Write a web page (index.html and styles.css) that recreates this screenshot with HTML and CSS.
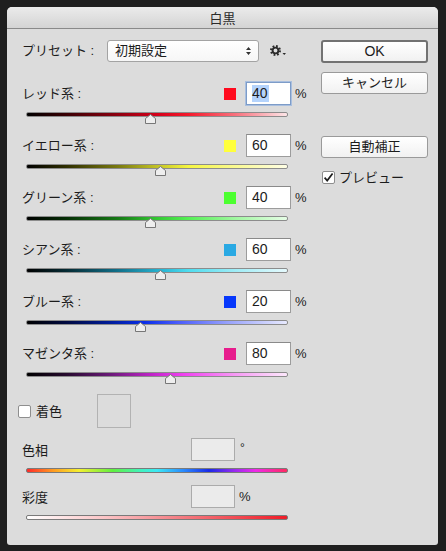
FILE: index.html
```html
<!DOCTYPE html>
<html lang="ja">
<head>
<meta charset="utf-8">
<title>白黒</title>
<link rel="stylesheet" href="styles.css">
</head>
<body>
<div class="dialog">
  <div class="titlebar">白黒</div>
  <div class="content">
    <div class="left">
      <div class="preset-row">
        <span class="preset-label">プリセット :</span>
        <div class="select">
          <span class="select-text">初期設定</span>
          <svg class="select-arrows" width="7" height="10" viewBox="0 0 7 10"><path d="M3.5 1 L6 4 H1 Z M3.5 9 L6 6 H1 Z" fill="#333"/></svg>
        </div>
        <svg class="gear" width="18" height="12" viewBox="0 0 18 12">
          <circle cx="5.5" cy="5.5" r="4.3" fill="none" stroke="#2b2b2b" stroke-width="2.4" stroke-dasharray="1.69 1.69"/>
          <circle cx="5.5" cy="5.5" r="2.9" fill="none" stroke="#2b2b2b" stroke-width="1.9"/>
          <path d="M12.5 8 H16 L14.25 10 Z" fill="#2b2b2b"/>
        </svg>
      </div>

      <div class="channel red">
        <div class="head">
          <span class="label">レッド系 :</span>
          <span class="swatch"></span>
          <div class="field focus"><span class="sel">40</span></div>
          <span class="unit">%</span>
        </div>
        <div class="slider">
          <div class="track"></div>
          <svg class="thumb" style="left:119px" width="11" height="10" viewBox="0 0 11 10"><path d="M0.5 9.5 V4.5 L5.5 0.5 L10.5 4.5 V9.5 Z" fill="#eeeeee" stroke="#777" stroke-width="1"/></svg>
        </div>
      </div>

      <div class="channel yellow">
        <div class="head">
          <span class="label">イエロー系 :</span>
          <span class="swatch"></span>
          <div class="field">60</div>
          <span class="unit">%</span>
        </div>
        <div class="slider">
          <div class="track"></div>
          <svg class="thumb" style="left:129px" width="11" height="10" viewBox="0 0 11 10"><path d="M0.5 9.5 V4.5 L5.5 0.5 L10.5 4.5 V9.5 Z" fill="#eeeeee" stroke="#777" stroke-width="1"/></svg>
        </div>
      </div>

      <div class="channel green">
        <div class="head">
          <span class="label">グリーン系 :</span>
          <span class="swatch"></span>
          <div class="field">40</div>
          <span class="unit">%</span>
        </div>
        <div class="slider">
          <div class="track"></div>
          <svg class="thumb" style="left:119px" width="11" height="10" viewBox="0 0 11 10"><path d="M0.5 9.5 V4.5 L5.5 0.5 L10.5 4.5 V9.5 Z" fill="#eeeeee" stroke="#777" stroke-width="1"/></svg>
        </div>
      </div>

      <div class="channel cyan">
        <div class="head">
          <span class="label">シアン系 :</span>
          <span class="swatch"></span>
          <div class="field">60</div>
          <span class="unit">%</span>
        </div>
        <div class="slider">
          <div class="track"></div>
          <svg class="thumb" style="left:129px" width="11" height="10" viewBox="0 0 11 10"><path d="M0.5 9.5 V4.5 L5.5 0.5 L10.5 4.5 V9.5 Z" fill="#eeeeee" stroke="#777" stroke-width="1"/></svg>
        </div>
      </div>

      <div class="channel blue">
        <div class="head">
          <span class="label">ブルー系 :</span>
          <span class="swatch"></span>
          <div class="field">20</div>
          <span class="unit">%</span>
        </div>
        <div class="slider">
          <div class="track"></div>
          <svg class="thumb" style="left:109px" width="11" height="10" viewBox="0 0 11 10"><path d="M0.5 9.5 V4.5 L5.5 0.5 L10.5 4.5 V9.5 Z" fill="#eeeeee" stroke="#777" stroke-width="1"/></svg>
        </div>
      </div>

      <div class="channel magenta">
        <div class="head">
          <span class="label">マゼンタ系 :</span>
          <span class="swatch"></span>
          <div class="field">80</div>
          <span class="unit">%</span>
        </div>
        <div class="slider">
          <div class="track"></div>
          <svg class="thumb" style="left:139px" width="11" height="10" viewBox="0 0 11 10"><path d="M0.5 9.5 V4.5 L5.5 0.5 L10.5 4.5 V9.5 Z" fill="#eeeeee" stroke="#777" stroke-width="1"/></svg>
        </div>
      </div>

      <div class="colorize">
        <div class="colorize-check">
          <span class="checkbox"></span>
          <span class="check-text">着色</span>
        </div>
        <div class="color-box"></div>
      </div>

      <div class="tint">
        <div class="head">
          <span class="tint-label">色相</span>
          <div class="field dim"></div>
          <span class="deg">°</span>
        </div>
        <div class="tint-slider"><div class="track hue"></div></div>
      </div>

      <div class="tint">
        <div class="head">
          <span class="tint-label">彩度</span>
          <div class="field dim"></div>
          <span class="unit">%</span>
        </div>
        <div class="tint-slider"><div class="track sat"></div></div>
      </div>
    </div>

    <div class="right">
      <div class="button default">OK</div>
      <div class="button cancel">キャンセル</div>
      <div class="button auto">自動補正</div>
      <div class="preview">
        <span class="checkbox checked">
          <svg width="13" height="13" viewBox="0 0 13 13"><path d="M2.6 6.6 L5.2 9.6 L10.6 2.4" fill="none" stroke="#1e1e1e" stroke-width="1.7"/></svg>
        </span>
        <span class="check-text">プレビュー</span>
      </div>
    </div>
  </div>
</div>
</body>
</html>
```

FILE: styles.css
```css
* {
  box-sizing: border-box;
}

html, body {
  margin: 0;
  padding: 0;
}

body {
  background: #1f1f1f;
  padding: 7px;
  font-family: "Liberation Sans", "Noto Sans CJK JP", sans-serif;
  font-size: 13px;
  color: #1c1c1c;
}

.dialog {
  width: 431px;
  height: 538px;
  background: #dcdcdc;
  border-radius: 5px 5px 3px 3px;
  overflow: hidden;
}

.titlebar {
  height: 22px;
  line-height: 21px;
  text-align: center;
  background: linear-gradient(#ebebeb, #d4d4d4);
  border-bottom: 1px solid #8a8a8a;
  color: #2a2a2a;
  font-family: "Noto Sans CJK JP", sans-serif;
}

.content {
  display: flex;
}

.left {
  width: 300px;
  padding-top: 11px;
}

.right {
  margin-left: 14px;
  width: 107px;
  padding-top: 11px;
}

/* preset */
.preset-row {
  height: 22px;
  display: flex;
  align-items: center;
}

.preset-label {
  width: 100px;
  padding-left: 15px;
  line-height: 16px;
}

.select {
  width: 152px;
  height: 22px;
  border: 1px solid #a3a3a3;
  border-radius: 3px;
  background: linear-gradient(#ffffff, #f6f6f6);
  display: flex;
  align-items: center;
  padding-left: 7px;
  padding-right: 6px;
}

.select-text {
  flex: 1;
  line-height: 16px;
}

.select-arrows {
  display: block;
}

.gear {
  display: block;
  margin-left: 11px;
}

/* channels */
.channel {
  margin-top: 0;
}

.preset-row + .channel {
  margin-top: 20px;
}

.head {
  height: 23px;
  display: flex;
  align-items: center;
}

.label {
  width: 217px;
  padding-left: 15px;
  line-height: 16px;
}

.swatch {
  width: 12px;
  height: 12px;
}

.field {
  width: 45px;
  height: 23px;
  margin-left: 10px;
  background: #ffffff;
  border: 1px solid #9c9c9c;
  border-top-color: #8a8a8a;
  padding-left: 5px;
  line-height: 21px;
  font-size: 14px;
}

.field.focus {
  border: 1px solid #7d9cc8;
  box-shadow: 0 0 0 1px #a9bfdf;
}

.sel {
  background: #b4d3fc;
  display: inline-block;
  line-height: 17px;
  padding-right: 1px;
}

.unit {
  margin-left: 4px;
  line-height: 16px;
}

.slider {
  position: relative;
  height: 29px;
  padding-top: 7px;
}

.track {
  margin-left: 19px;
  width: 262px;
  height: 5px;
  border: 1px solid #8c8c8c;
  border-radius: 2px;
}

.thumb {
  position: absolute;
  top: 9px;
  margin-left: 19px;
  display: block;
}

.red .swatch { background: #ff0a1e; }
.yellow .swatch { background: #ffff3c; }
.green .swatch { background: #4cff30; }
.cyan .swatch { background: #2aa9e3; }
.blue .swatch { background: #0637fb; }
.magenta .swatch { background: #e71c8c; }

.red .track {
  background: linear-gradient(to right, #000 0%, #3a0004 15%, #8e0010 35%, #d5001a 50%, #f41a2c 62%, #f8707c 80%, #fde6e8 100%);
}
.yellow .track {
  background: linear-gradient(to right, #000 0%, #2e2e00 15%, #7a7a10 35%, #cccc28 52%, #f5f540 62%, #fafa90 80%, #fefee6 100%);
}
.green .track {
  background: linear-gradient(to right, #000 0%, #052e05 15%, #167a16 35%, #34c834 50%, #55f055 62%, #a0f7a0 80%, #e6fde6 100%);
}
.cyan .track {
  background: linear-gradient(to right, #000 0%, #052a33 15%, #11708a 35%, #28b6d4 52%, #4edcee 62%, #9eecf6 80%, #e6fafd 100%);
}
.blue .track {
  background: linear-gradient(to right, #000 0%, #000a40 15%, #001c9a 32%, #0a2ee8 45%, #4a5cfb 58%, #9aa4fb 78%, #e8eafe 100%);
}
.magenta .track {
  background: linear-gradient(to right, #000 0%, #260a2e 15%, #6a1a78 32%, #c024c8 48%, #f040f0 60%, #f79af5 80%, #fde8fc 100%);
}

/* colorize */
.colorize {
  height: 34px;
  display: flex;
  align-items: center;
}

.colorize-check {
  width: 90px;
  padding-left: 11px;
  display: flex;
  align-items: center;
}

.checkbox {
  width: 13px;
  height: 13px;
  background: #ffffff;
  border: 1px solid #8e8e8e;
  border-radius: 2px;
  display: block;
  position: relative;
}

.checkbox svg {
  position: absolute;
  left: -1px;
  top: -1px;
  display: block;
}

.check-text {
  margin-left: 5px;
  line-height: 16px;
  font-family: "Noto Sans CJK JP", sans-serif;
}

.color-box {
  width: 34px;
  height: 34px;
  border: 1px solid #b2b2b2;
  background: #dcdcdc;
}

.tint {
  margin-top: 10px;
  height: 36px;
}

.tint + .tint {
  margin-top: 11px;
}

.tint-label {
  width: 184px;
  padding-left: 15px;
  line-height: 16px;
  font-family: "Noto Sans CJK JP", sans-serif;
}

.field.dim {
  width: 44px;
  margin-left: 0;
  background: #ebebeb;
  border: 1px solid #ababab;
}

.deg {
  margin-left: 5px;
  align-self: flex-start;
  line-height: 20px;
  font-size: 12px;
}

.tint-slider {
  padding-top: 7px;
}

.track.hue {
  border-color: #7a7a7a;
  background: linear-gradient(to right, #ff2a2a 0%, #ff9a20 10%, #f4f030 20%, #60f040 33%, #40f2c0 44%, #3ce8f4 50%, #2a8cff 60%, #1a2ae8 70%, #9a2af0 80%, #f02ae8 88%, #ff2a60 100%);
}

.track.sat {
  border-color: #7a7a7a;
  background: linear-gradient(to right, #ffffff 0%, #fbc4c6 30%, #f47a80 60%, #f01c28 100%);
}

/* right buttons */
.button {
  height: 22px;
  border: 1px solid #9a9a9a;
  border-radius: 3px;
  background: linear-gradient(#ffffff, #f1f1f1);
  text-align: center;
  line-height: 20px;
  font-family: "Liberation Sans", "Noto Sans CJK JP", sans-serif;
}

.button.default {
  height: 23px;
  border: 2px solid #727272;
  line-height: 19px;
  font-size: 14px;
}

.button.cancel {
  margin-top: 9px;
}

.button.auto {
  margin-top: 42px;
}

.preview {
  margin-top: 11px;
  display: flex;
  align-items: center;
  padding-left: 1px;
}

.preview .check-text {
  margin-left: 4px;
}
```
